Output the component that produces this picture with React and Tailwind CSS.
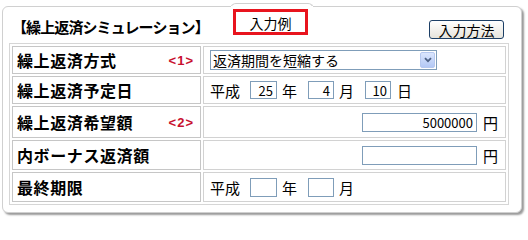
import React from "react";

const font = { fontFamily: '"Noto Sans CJK JP", "Noto Sans", sans-serif' };

function Box({ w, h = "h-[18px]", value }) {
  return (
    <div
      className={`${w} ${h} border border-[#7f9db9] bg-white flex items-center justify-end pr-[3px] text-[13px] leading-none text-black`}
    >
      {value}
    </div>
  );
}

function Label({ text, mark, h }) {
  return (
    <div className={`${h} border border-[#c6c6c6] bg-white flex items-center pl-[4px] pr-[6px]`}>
      <span className="text-[16px] font-bold tracking-[0.6px] text-black leading-none">{text}</span>
      {mark && (
        <span className="ml-auto text-[13px] font-bold text-[#c8102e] leading-none tracking-[1px]" style={{ fontFamily: '"Liberation Sans", sans-serif' }}>
          {mark}
        </span>
      )}
    </div>
  );
}

function Value({ children, className = "" }) {
  return (
    <div className={`border border-[#d2d2d2] bg-white flex items-center text-[14px] text-black leading-none ${className}`}>
      {children}
    </div>
  );
}

export default function App() {
  return (
    <div className="w-[528px] h-[221px] bg-white relative overflow-hidden" style={font}>
      <div className="absolute left-[230px] top-[3px] w-[84px] h-[8px] bg-white border-t border-x border-[#d0d0d0] rounded-t-[6px] z-0" />
      <div className="ml-[2px] mt-[6px] w-[520px] h-[207px] border border-[#d0d0d0] rounded-[6px] bg-white shadow-[2px_2px_2px_#9a9a9a] relative">
        <div className="absolute left-[228px] -top-[1px] w-[82px] h-[3px] bg-white" />
        <div className="flex items-start h-[36px] pl-[9px] relative">
          <div className="w-[200px] mt-[10px] text-[15px] font-bold tracking-[-0.9px] leading-[20px] text-black whitespace-nowrap">
            【繰上返済シミュレーション】
          </div>
          <div className="ml-[21px] mt-[2px] w-[75px] h-[26px] border-[3px] border-[#e8141e] bg-white flex items-center justify-center pt-[2px] text-[14px] text-black leading-none">
            入力例
          </div>
          <div className="ml-[121px] mt-[13px] w-[75px] h-[19px] border border-[#1c3f66] rounded-[3px] bg-gradient-to-b from-white to-[#e6e4dc] flex items-center justify-center text-[14px] text-black leading-none">
            入力方法
          </div>
        </div>
        <div className="ml-[6px] w-[500px] border border-[#d6d6d6] p-[2px] grid grid-cols-[189px_1fr] gap-[2px]">
          <Label h="h-[28px]" text="繰上返済方式" mark="<1>" />
          <Value className="h-[28px] pl-[6px]">
            <div className="w-[227px] h-[20px] border border-[#7f9db9] bg-white flex items-center pl-[2px] pr-[1px]">
              <span className="text-[14px] leading-none">返済期間を短縮する</span>
              <div className="ml-auto w-[15px] h-[16px] rounded-[2px] border border-[#b6c8ef] bg-gradient-to-b from-[#dbe6fd] to-[#b3c8f5] flex items-center justify-center">
                <svg width="8" height="6" viewBox="0 0 8 6">
                  <path d="M1 1.2 L4 4.2 L7 1.2" fill="none" stroke="#4d6185" strokeWidth="1.8" />
                </svg>
              </div>
            </div>
          </Value>

          <Label h="h-[28px]" text="繰上返済予定日" />
          <Value className="h-[28px] pl-[6px]">
            <span className="text-[15px] w-[34px]">平成</span>
            <div className="ml-[6px]"><Box w="w-[27px]" value="25" /></div>
            <span className="ml-[5px] text-[15px]">年</span>
            <div className="ml-[11px]"><Box w="w-[26px]" value="4" /></div>
            <span className="ml-[5px] text-[15px]">月</span>
            <div className="ml-[11px]"><Box w="w-[26px]" value="10" /></div>
            <span className="ml-[6px] text-[15px]">日</span>
          </Value>

          <Label h="h-[32px]" text="繰上返済希望額" mark="<2>" />
          <Value className="h-[32px] justify-end pr-[7px]">
            <Box w="w-[115px]" h="h-[19px]" value="5000000" />
            <span className="ml-[6px] text-[15px]">円</span>
          </Value>

          <Label h="h-[30px]" text="内ボーナス返済額" />
          <Value className="h-[30px] justify-end pr-[7px]">
            <Box w="w-[115px]" h="h-[19px]" value="" />
            <span className="ml-[6px] text-[15px]">円</span>
          </Value>

          <Label h="h-[30px]" text="最終期限" />
          <Value className="h-[30px] pl-[6px]">
            <span className="text-[15px] w-[34px]">平成</span>
            <div className="ml-[6px]"><Box w="w-[27px]" h="h-[19px]" value="" /></div>
            <span className="ml-[5px] text-[15px]">年</span>
            <div className="ml-[11px]"><Box w="w-[26px]" h="h-[19px]" value="" /></div>
            <span className="ml-[5px] text-[15px]">月</span>
          </Value>
        </div>
      </div>
    </div>
  );
}
